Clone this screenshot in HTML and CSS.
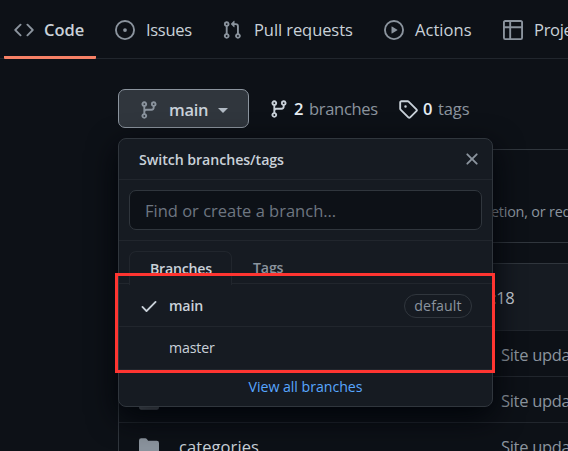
FILE: index.html
```
<!DOCTYPE html>
<html lang="en">
<head>
<meta charset="utf-8">
<title>Branches</title>
<link rel="stylesheet" href="styles.css">
</head>
<body>
<svg class="defs" width="0" height="0">
  <symbol id="branch" viewBox="0 0 16 16"><path fill-rule="evenodd" d="M11.75 2.5a.75.75 0 100 1.5.75.75 0 000-1.5zm-2.25.75a2.25 2.25 0 113 2.122V6A2.5 2.5 0 0110 8.500H6a1 1 0 00-1 1v1.128a2.251 2.251 0 11-1.5 0V5.372a2.250 2.250 0 111.500 0v1.836A2.492 2.492 0 016 7h4a1 1 0 001-1v-.628A2.250 2.250 0 019.500 3.250zM4.250 12a.75.75 0 100 1.500.75.75 0 000-1.500zM3.500 3.250a.75.75 0 111.500 0 .75.75 0 01-1.500 0z"/></symbol>
  <symbol id="folder" viewBox="0 0 16 16"><path d="M1.750 1A1.750 1.750 0 000 2.750v10.500C0 14.216.784 15 1.750 15h12.500A1.750 1.750 0 0016 13.250v-8.500A1.750 1.750 0 0014.250 3H7.500a.25.25 0 01-.2-.1l-.9-1.200C6.070 1.260 5.550 1 5 1H1.750z"/></symbol>
</svg>
<nav class="nav">
  <a class="item selected"><svg class="icon" viewBox="0 0 16 16"><path fill-rule="evenodd" d="M4.720 3.220a.75.75 0 011.060 1.060L2.060 8l3.720 3.720a.75.75 0 11-1.060 1.060L.47 8.530a.75.75 0 010-1.060l4.250-4.250zm6.560 0a.75.75 0 10-1.060 1.060L13.940 8l-3.720 3.720a.75.75 0 101.060 1.060l4.250-4.250a.75.75 0 000-1.060l-4.250-4.250z"/></svg><span>Code</span></a>
  <a class="item issues"><svg class="icon" viewBox="0 0 16 16"><path d="M8 9.500a1.500 1.500 0 100-3 1.500 1.500 0 000 3z"/><path fill-rule="evenodd" d="M8 0a8 8 0 100 16A8 8 0 008 0zM1.500 8a6.500 6.500 0 1113 0 6.500 6.500 0 01-13 0z"/></svg><span>Issues</span></a>
  <a class="item pulls"><svg class="icon" viewBox="0 0 16 16"><path fill-rule="evenodd" d="M7.177 3.073L9.573.677A.25.25 0 0110 .854v4.792a.25.25 0 01-.427.177L7.177 3.427a.25.25 0 010-.354zM3.750 2.500a.75.75 0 100 1.500.75.75 0 000-1.500zm-2.250.75a2.250 2.250 0 113 2.122v5.256a2.251 2.251 0 11-1.500 0V5.372A2.250 2.250 0 011.500 3.250zM11 2.500h-1V4h1a1 1 0 011 1v5.628a2.251 2.251 0 101.500 0V5A2.500 2.500 0 0011 2.500zm1 10.250a.75.75 0 111.500 0 .75.75 0 01-1.500 0zM3.750 12a.75.75 0 100 1.500.75.75 0 000-1.500z"/></svg><span>Pull requests</span></a>
  <a class="item actions"><svg class="icon" viewBox="0 0 16 16"><path fill-rule="evenodd" d="M1.500 8a6.500 6.500 0 1113 0 6.500 6.500 0 01-13 0zM8 0a8 8 0 100 16A8 8 0 008 0zM6.379 5.227A.25.25 0 006 5.442v5.117a.25.25 0 00.379.214l4.264-2.559a.25.25 0 000-.428L6.379 5.227z"/></svg><span>Actions</span></a>
  <a class="item projects"><svg class="icon" viewBox="0 0 16 16"><path fill-rule="evenodd" d="M0 1.750C0 .784.784 0 1.750 0h12.500C15.216 0 16 .784 16 1.750v12.500A1.750 1.750 0 0114.250 16H1.750A1.750 1.750 0 010 14.250V1.750zM1.500 6.500v7.750c0 .138.112.25.25.25H5v-8H1.500zM6.500 6.500v8h7.750a.25.25 0 00.25-.25V6.500h-8zM14.500 5V1.750a.25.25 0 00-.25-.25H6.500V5h8zM5 5V1.500H1.750a.25.25 0 00-.25.25V5H5z"/></svg><span>Projects</span></a>
</nav>
<main class="content">
  <div class="toolbar">
    <button class="branch-button"><svg class="icon"><use href="#branch"/></svg><b>main</b><i class="caret"></i></button>
    <a class="stat"><svg class="icon"><use href="#branch"/></svg><b>2</b><span class="branches-word">branches</span></a>
    <a class="stat tags"><svg class="icon" viewBox="0 0 16 16"><path fill-rule="evenodd" d="M2.500 7.775V2.750a.25.25 0 01.25-.25h5.025a.25.25 0 01.177.073l6.250 6.250a.25.25 0 010 .354l-5.025 5.025a.25.25 0 01-.354 0l-6.250-6.250a.25.25 0 01-.073-.177zm-1.500 0V2.750C1 1.784 1.784 1 2.750 1h5.025c.464 0 .91.184 1.238.513l6.250 6.250a1.750 1.750 0 010 2.474l-5.026 5.026a1.750 1.750 0 01-2.474 0l-6.250-6.250A1.750 1.750 0 011 7.775zM6 5a1 1 0 100 2 1 1 0 000-2z"/></svg><b>0</b><span>tags</span></a>
    <section class="menu">
      <header class="menu-head"><b>Switch branches/tags</b><svg class="close" viewBox="0 0 16 16"><path fill-rule="evenodd" d="M3.720 3.720a.75.75 0 011.060 0L8 6.940l3.220-3.220a.75.75 0 111.060 1.060L9.060 8l3.220 3.220a.75.75 0 11-1.060 1.060L8 9.060l-3.220 3.220a.75.75 0 01-1.060-1.060L6.940 8 3.720 4.780a.75.75 0 010-1.060z"/></svg></header>
      <div class="search"><div class="field"><span>Find or create a branch…</span></div></div>
      <div class="tabs"><b class="tab active"><span>Branches</span></b><b class="tab"><span>Tags</span></b></div>
      <div class="option current"><svg class="check" viewBox="0 0 16 16"><path fill-rule="evenodd" d="M13.780 4.220a.75.75 0 010 1.060l-7.250 7.250a.75.75 0 01-1.060 0L2.220 9.280a.75.75 0 011.060-1.060L6 10.940l6.720-6.720a.75.75 0 011.060 0z"/></svg><b class="name">main</b><span class="label"><span>default</span></span></div>
      <div class="option"><span class="check"></span><span class="name">master</span></div>
      <footer class="menu-foot"><span>View all branches</span></footer>
    </section>
    <div class="highlight"></div>
  </div>
  <div class="notice"><span>deletion, or require</span></div>
  <div class="files">
    <div class="commit"><span>2:18</span></div>
    <div class="row"><svg class="icon"><use href="#folder"/></svg><span class="file"></span><span class="message">Site updated</span></div>
    <div class="row"><svg class="icon"><use href="#folder"/></svg><span class="file"></span><span class="message">Site updated</span></div>
    <div class="row"><svg class="icon"><use href="#folder"/></svg><span class="file">categories</span><span class="message">Site updated</span></div>
  </div>
</main>
</body>
</html>
```
FILE: styles.css
```
* { box-sizing: border-box; }
html { overflow: hidden; }
body {
  margin: 0;
  width: 568px;
  height: 451px;
  overflow: hidden;
  background: #0d1117;
  color: #c9d1d9;
  font: 16.5px/24px "Open Sans", "Noto Sans", sans-serif;
  letter-spacing: -0.3px;
  white-space: nowrap;
}
b { font-weight: 600; }
.defs { display: block; }
.icon { width: 20px; height: 20px; flex: none; fill: #8b949e; }

.nav {
  display: flex;
  height: 59px;
  padding-left: 4px;
  border-bottom: 1px solid #21262d;
}
.item { display: flex; align-items: center; gap: 10px; height: 59px; flex: none; padding-left: 10px; }
.item span { padding-top: 1px; }
.selected { width: 92px; border-bottom: 3px solid #f78166; border-radius: 1px; font-weight: 600; letter-spacing: 0; padding-top: 3px; }
.issues { width: 107px; margin-left: 9px; }
.pulls { width: 162px; gap: 12px; letter-spacing: -0.08px; }
.actions { width: 119px; }
.issues, .actions, .projects { gap: 11px; }
.actions span { letter-spacing: 0.05px; }

.content { width: 700px; padding: 30px 0 0 118px; }
.toolbar { position: relative; display: flex; height: 60px; align-items: flex-start; }
.branch-button {
  display: flex;
  align-items: center;
  width: 131px;
  height: 39px;
  padding: 2px 0 0 20px;
  border: 1px solid #8b949e;
  border-radius: 7px;
  background: #30363d;
  color: #c9d1d9;
  font: inherit;
  letter-spacing: inherit;
}
.branch-button b { width: 39px; margin: 0 10px; }
.caret { margin-top: 2px; border: 5px solid transparent; border-top-color: #b1bac4; border-bottom: 0; }
.stat { display: flex; align-items: center; height: 39px; margin-left: 20px; color: #8b949e; }
.stat .icon { fill: #c9d1d9; margin-right: 5px; }
.stat b { width: 10px; margin-right: 5px; color: #e6edf3; }
.branches-word { width: 70px; }
.tags { margin-left: 19px; }
.tags span { letter-spacing: -0.1px; }

.menu {
  position: absolute;
  z-index: 2;
  left: 0;
  top: 49px;
  width: 375px;
  height: 269px;
  border: 1px solid #30363d;
  border-radius: 8px;
  background: #161b22;
  box-shadow: 0 10px 30px #010409;
  font-size: 14.2px;
  line-height: 20px;
  letter-spacing: -0.17px;
}
.menu-head { display: flex; align-items: center; justify-content: space-between; height: 41px; padding: 0 10px 0 20px; border-bottom: 1px solid #21262d; }
.menu-head b { padding-top: 1px; letter-spacing: -0.06px; }
.close { width: 20px; height: 20px; fill: #8b949e; }
.search { height: 61px; padding: 10px; border-bottom: 1px solid #21262d; }
.field { display: flex; align-items: center; height: 40px; padding: 1px 0 0 15px; border: 1px solid #30363d; border-radius: 7px; background: #0d1117; color: #6e7681; font-size: 16.5px; letter-spacing: 0; }
.tabs { display: flex; height: 43px; padding: 10px 0 0 10px; border-bottom: 1px solid #21262d; color: #8b949e; }
.tab { display: flex; align-items: center; padding: 1px 21px 0; height: 33px; }
.active { width: 103px; margin-bottom: -1px; height: 34px; padding: 0 20px; border: 1px solid #21262d; border-bottom: 0; border-radius: 7px 7px 0 0; background: #161b22; color: #c9d1d9; letter-spacing: -0.25px; }
.option { display: flex; align-items: center; height: 43px; padding: 0 20px; border-bottom: 1px solid #21262d; }
.current { padding-top: 1px; }
.check { width: 20px; height: 20px; margin-right: 10px; fill: #c9d1d9; }
.name { flex: 1; }
.label { display: flex; align-items: center; justify-content: center; width: 68px; height: 24px; border: 1px solid #30363d; border-radius: 12px; color: #8b949e; font-weight: 500; letter-spacing: 0.1px; }
.menu-foot { display: flex; align-items: center; justify-content: center; height: 34px; color: #58a6ff; letter-spacing: -0.05px; }
.highlight { position: absolute; z-index: 3; left: -3px; top: 184px; width: 380px; height: 100px; border: 3px solid #ff3531; }

.notice { display: flex; align-items: center; height: 94px; padding: 31px 0 0 352px; border: 1px solid #30363d; border-radius: 7px; color: #8b949e; font-size: 14.4px; letter-spacing: -0.2px; }
.files { margin-top: 20px; height: 220px; border: 1px solid #30363d; }
.commit { display: flex; align-items: center; height: 67px; padding: 2px 0 0 364px; background: #161b22; border-bottom: 1px solid #21262d; color: #c9d1d9; }
.row { display: flex; align-items: center; height: 46px; padding: 2px 0 0 20px; border-bottom: 1px solid #21262d; color: #8b949e; }
.row .icon { fill: #8b949e; }
.file { width: 302px; margin-left: 20px; color: #c9d1d9; letter-spacing: 0.08px; }
.message { margin-left: 20px; }
```
